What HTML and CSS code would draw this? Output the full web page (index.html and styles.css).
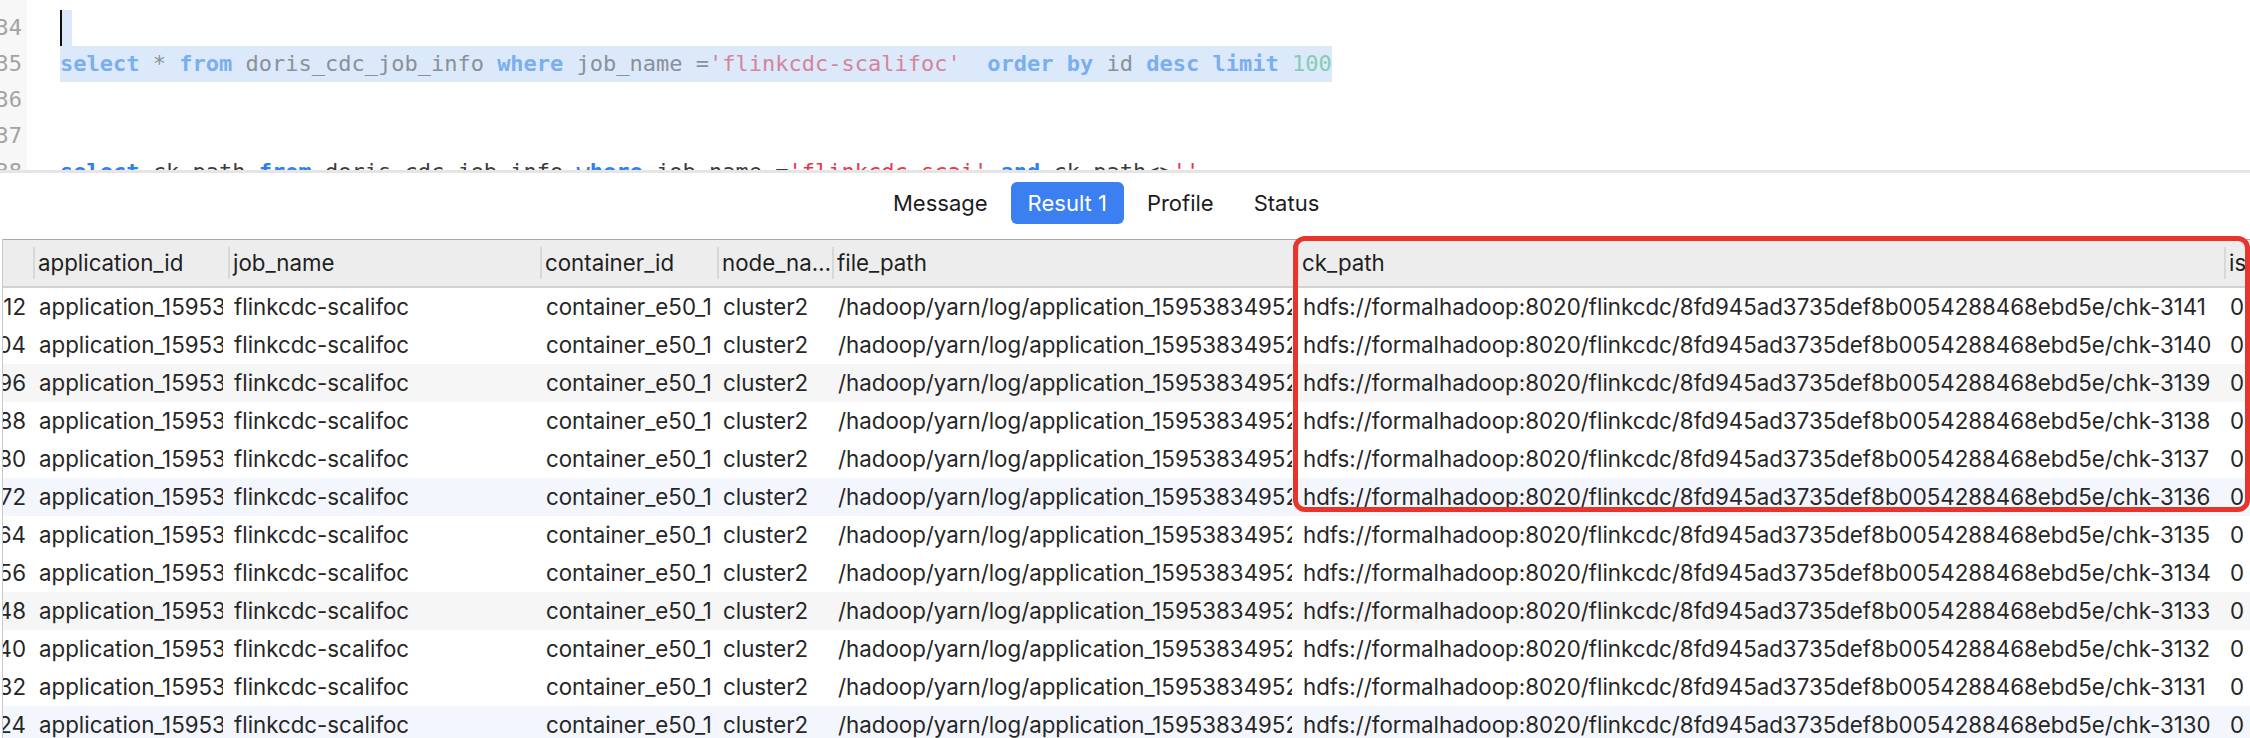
FILE: index.html
```html
<!DOCTYPE html>
<html lang="en">
<head>
<meta charset="utf-8">
<title>Query result</title>
<link rel="stylesheet" href="styles.css">
</head>
<body>
<div class="editor">
  <div class="gutter">
    <div class="ln">33</div>
    <div class="ln">34</div>
    <div class="ln">35</div>
    <div class="ln">36</div>
    <div class="ln">37</div>
    <div class="ln">38</div>
  </div>
  <div class="code">
    <div class="line"></div>
    <div class="line"><span class="caret"></span><span class="sel nl"></span></div>
    <div class="line"><span class="sel faded"><span class="kw">select</span> * <span class="kw">from</span> doris_cdc_job_info <span class="kw">where</span> job_name =<span class="str">'flinkcdc-scalifoc'</span>  <span class="kw">order</span> <span class="kw">by</span> id <span class="kw">desc</span> <span class="kw">limit</span> <span class="num">100</span></span></div>
    <div class="line"></div>
    <div class="line"></div>
    <div class="line"><span class="kw">select</span> ck_path <span class="kw">from</span> doris_cdc_job_info <span class="kw">where</span> job_name =<span class="str">'flinkcdc-scai'</span> <span class="kw">and</span> ck_path&lt;&gt;<span class="str">''</span></div>
  </div>
</div>

<div class="results">
  <div class="tabs">
    <div class="tab">Message</div>
    <div class="tab active">Result 1</div>
    <div class="tab">Profile</div>
    <div class="tab">Status</div>
  </div>

  <div class="grid">
    <div class="row head">
      <div class="hcell first"></div>
      <div class="hcell">application_id</div>
      <div class="hcell">job_name</div>
      <div class="hcell">container_id</div>
      <div class="hcell">node_name</div>
      <div class="hcell">file_path</div>
      <div class="hcell">ck_path</div>
      <div class="hcell">is_deleted</div>
    </div>

    <div class="row">
      <div class="cell id"><span>3312</span></div>
      <div class="cell">application_1595383495207_0112</div>
      <div class="cell">flinkcdc-scalifoc</div>
      <div class="cell">container_e50_1595383495207_0112_01_000001</div>
      <div class="cell">cluster2</div>
      <div class="cell">/hadoop/yarn/log/application_1595383495207_0112/container_e50_1595383495207_0112_01_000001</div>
      <div class="cell">hdfs://formalhadoop:8020/flinkcdc/8fd945ad3735def8b0054288468ebd5e/chk-3141</div>
      <div class="cell">0</div>
    </div>
    <div class="row">
      <div class="cell id"><span>3304</span></div>
      <div class="cell">application_1595383495207_0112</div>
      <div class="cell">flinkcdc-scalifoc</div>
      <div class="cell">container_e50_1595383495207_0112_01_000001</div>
      <div class="cell">cluster2</div>
      <div class="cell">/hadoop/yarn/log/application_1595383495207_0112/container_e50_1595383495207_0112_01_000001</div>
      <div class="cell">hdfs://formalhadoop:8020/flinkcdc/8fd945ad3735def8b0054288468ebd5e/chk-3140</div>
      <div class="cell">0</div>
    </div>
    <div class="row tint-gray">
      <div class="cell id"><span>3296</span></div>
      <div class="cell">application_1595383495207_0112</div>
      <div class="cell">flinkcdc-scalifoc</div>
      <div class="cell">container_e50_1595383495207_0112_01_000001</div>
      <div class="cell">cluster2</div>
      <div class="cell">/hadoop/yarn/log/application_1595383495207_0112/container_e50_1595383495207_0112_01_000001</div>
      <div class="cell">hdfs://formalhadoop:8020/flinkcdc/8fd945ad3735def8b0054288468ebd5e/chk-3139</div>
      <div class="cell">0</div>
    </div>
    <div class="row">
      <div class="cell id"><span>3288</span></div>
      <div class="cell">application_1595383495207_0112</div>
      <div class="cell">flinkcdc-scalifoc</div>
      <div class="cell">container_e50_1595383495207_0112_01_000001</div>
      <div class="cell">cluster2</div>
      <div class="cell">/hadoop/yarn/log/application_1595383495207_0112/container_e50_1595383495207_0112_01_000001</div>
      <div class="cell">hdfs://formalhadoop:8020/flinkcdc/8fd945ad3735def8b0054288468ebd5e/chk-3138</div>
      <div class="cell">0</div>
    </div>
    <div class="row">
      <div class="cell id"><span>3280</span></div>
      <div class="cell">application_1595383495207_0112</div>
      <div class="cell">flinkcdc-scalifoc</div>
      <div class="cell">container_e50_1595383495207_0112_01_000001</div>
      <div class="cell">cluster2</div>
      <div class="cell">/hadoop/yarn/log/application_1595383495207_0112/container_e50_1595383495207_0112_01_000001</div>
      <div class="cell">hdfs://formalhadoop:8020/flinkcdc/8fd945ad3735def8b0054288468ebd5e/chk-3137</div>
      <div class="cell">0</div>
    </div>
    <div class="row tint-blue">
      <div class="cell id"><span>3272</span></div>
      <div class="cell">application_1595383495207_0112</div>
      <div class="cell">flinkcdc-scalifoc</div>
      <div class="cell">container_e50_1595383495207_0112_01_000001</div>
      <div class="cell">cluster2</div>
      <div class="cell">/hadoop/yarn/log/application_1595383495207_0112/container_e50_1595383495207_0112_01_000001</div>
      <div class="cell">hdfs://formalhadoop:8020/flinkcdc/8fd945ad3735def8b0054288468ebd5e/chk-3136</div>
      <div class="cell">0</div>
    </div>
    <div class="row">
      <div class="cell id"><span>3264</span></div>
      <div class="cell">application_1595383495207_0112</div>
      <div class="cell">flinkcdc-scalifoc</div>
      <div class="cell">container_e50_1595383495207_0112_01_000001</div>
      <div class="cell">cluster2</div>
      <div class="cell">/hadoop/yarn/log/application_1595383495207_0112/container_e50_1595383495207_0112_01_000001</div>
      <div class="cell">hdfs://formalhadoop:8020/flinkcdc/8fd945ad3735def8b0054288468ebd5e/chk-3135</div>
      <div class="cell">0</div>
    </div>
    <div class="row">
      <div class="cell id"><span>3256</span></div>
      <div class="cell">application_1595383495207_0112</div>
      <div class="cell">flinkcdc-scalifoc</div>
      <div class="cell">container_e50_1595383495207_0112_01_000001</div>
      <div class="cell">cluster2</div>
      <div class="cell">/hadoop/yarn/log/application_1595383495207_0112/container_e50_1595383495207_0112_01_000001</div>
      <div class="cell">hdfs://formalhadoop:8020/flinkcdc/8fd945ad3735def8b0054288468ebd5e/chk-3134</div>
      <div class="cell">0</div>
    </div>
    <div class="row tint-gray">
      <div class="cell id"><span>3248</span></div>
      <div class="cell">application_1595383495207_0112</div>
      <div class="cell">flinkcdc-scalifoc</div>
      <div class="cell">container_e50_1595383495207_0112_01_000001</div>
      <div class="cell">cluster2</div>
      <div class="cell">/hadoop/yarn/log/application_1595383495207_0112/container_e50_1595383495207_0112_01_000001</div>
      <div class="cell">hdfs://formalhadoop:8020/flinkcdc/8fd945ad3735def8b0054288468ebd5e/chk-3133</div>
      <div class="cell">0</div>
    </div>
    <div class="row">
      <div class="cell id"><span>3240</span></div>
      <div class="cell">application_1595383495207_0112</div>
      <div class="cell">flinkcdc-scalifoc</div>
      <div class="cell">container_e50_1595383495207_0112_01_000001</div>
      <div class="cell">cluster2</div>
      <div class="cell">/hadoop/yarn/log/application_1595383495207_0112/container_e50_1595383495207_0112_01_000001</div>
      <div class="cell">hdfs://formalhadoop:8020/flinkcdc/8fd945ad3735def8b0054288468ebd5e/chk-3132</div>
      <div class="cell">0</div>
    </div>
    <div class="row">
      <div class="cell id"><span>3232</span></div>
      <div class="cell">application_1595383495207_0112</div>
      <div class="cell">flinkcdc-scalifoc</div>
      <div class="cell">container_e50_1595383495207_0112_01_000001</div>
      <div class="cell">cluster2</div>
      <div class="cell">/hadoop/yarn/log/application_1595383495207_0112/container_e50_1595383495207_0112_01_000001</div>
      <div class="cell">hdfs://formalhadoop:8020/flinkcdc/8fd945ad3735def8b0054288468ebd5e/chk-3131</div>
      <div class="cell">0</div>
    </div>
    <div class="row tint-blue">
      <div class="cell id"><span>3224</span></div>
      <div class="cell">application_1595383495207_0112</div>
      <div class="cell">flinkcdc-scalifoc</div>
      <div class="cell">container_e50_1595383495207_0112_01_000001</div>
      <div class="cell">cluster2</div>
      <div class="cell">/hadoop/yarn/log/application_1595383495207_0112/container_e50_1595383495207_0112_01_000001</div>
      <div class="cell">hdfs://formalhadoop:8020/flinkcdc/8fd945ad3735def8b0054288468ebd5e/chk-3130</div>
      <div class="cell">0</div>
    </div>
  </div>

  <div class="callout"></div>
</div>
</body>
</html>
```

FILE: styles.css
```css
* { box-sizing: border-box; }

html, body {
  margin: 0;
  padding: 0;
  width: 2250px;
  height: 738px;
  overflow: hidden;
  background: #ffffff;
}

body {
  font-family: "Inter", "Liberation Sans", sans-serif;
  color: #222222;
}

/* ---------- editor ---------- */
.editor {
  height: 170px;
  overflow: hidden;
  display: flex;
  font-family: "DejaVu Sans Mono", "Liberation Mono", monospace;
  font-size: 22px;
}

.gutter {
  width: 27px;
  flex: none;
  background: #f7f7f7;
  margin-top: -26px;
  display: flex;
  flex-direction: column;
  align-items: flex-end;
}

.ln {
  height: 36px;
  line-height: 36px;
  color: #a3a3a3;
  padding-right: 5px;
  white-space: nowrap;
}

.code {
  flex: 1;
  margin-top: -26px;
  padding-left: 33px;
}

.line {
  height: 36px;
  line-height: 36px;
  white-space: pre;
  color: #3c3c3c;
}

.caret {
  display: inline-block;
  vertical-align: top;
  width: 2px;
  height: 36px;
  background: #111111;
}

.sel {
  background: #dce9fb;
  display: inline-block;
  vertical-align: top;
  height: 36px;
}

.sel.nl {
  width: 10px;
}

.kw { color: #2f80ed; font-weight: bold; }
.str { color: #e8364f; }
.num { color: #27a676; }

.faded { color: #8a9099; }
.faded .kw { color: #79aef0; }
.faded .str { color: #d5849a; }
.faded .num { color: #84cdb2; }

/* ---------- results ---------- */
.results {
  position: relative;
  border-top: 3px solid #e5e5e5;
}

.tabs {
  display: flex;
  gap: 6px;
  padding: 9px 0 0 876px;
  height: 66px;
  font-size: 22px;
}

.tab {
  height: 42px;
  line-height: 42px;
  padding: 0 17px;
  border-radius: 6px;
  color: #1c1c1c;
}

.tab.active {
  background: #3b7ff0;
  color: #ffffff;
}

/* ---------- grid ---------- */
.grid {
  margin-left: 2px;
  border-left: 1px solid #c9c9c9;
  font-size: 22.3px;
}

.row {
  display: grid;
  grid-template-columns: 30px 195px 312px 177px 115px 465px 927px 60px;
  height: 38px;
}

.row.head {
  height: 49px;
  background: #ededed;
  border-top: 1px solid #a9a9a9;
  border-bottom: 2px solid #d3d3d3;
}

.hcell {
  margin: 7px 0;
  padding-left: 3px;
  border-left: 2px solid #d8d8d8;
  line-height: 32px;
  white-space: nowrap;
  overflow: hidden;
  text-overflow: ellipsis;
  min-width: 0;
  color: #1f1f1f;
}

.hcell.first {
  border-left: none;
}

.hcell:last-child {
  text-overflow: clip;
}

.cell {
  padding-left: 6px;
  margin-right: 5px;
  line-height: 38px;
  white-space: nowrap;
  overflow: hidden;
  min-width: 0;
  color: #262626;
}

.cell.id {
  display: flex;
  justify-content: flex-end;
  padding-left: 0;
  margin-right: 7px;
}

.cell.id span { flex: none; }

.row.tint-gray { background: #f6f6f6; }
.row.tint-blue { background: #f3f6fc; }

/* ---------- red annotation ---------- */
.callout {
  position: absolute;
  left: 1293px;
  top: 63px;
  width: 957px;
  height: 276px;
  border: 5px solid #e8352b;
  border-radius: 12px;
  pointer-events: none;
}
```
